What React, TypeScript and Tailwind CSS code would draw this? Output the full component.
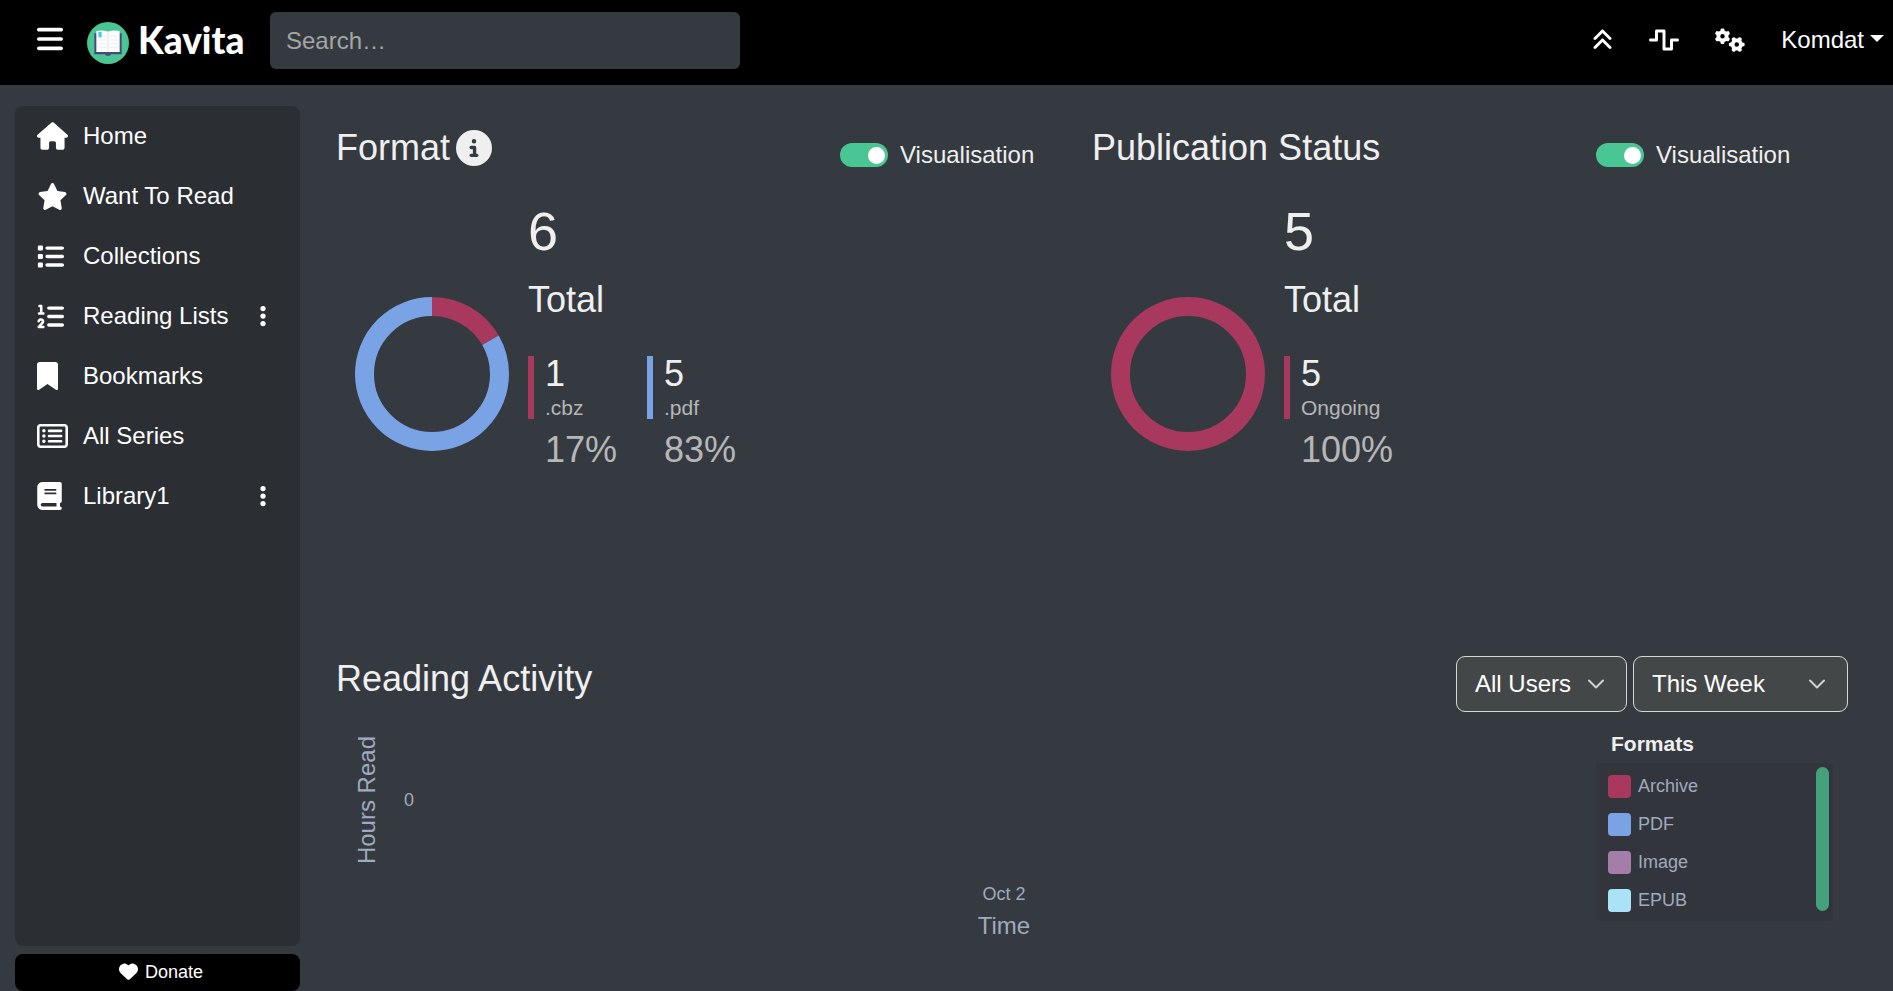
import type { ReactNode } from "react";
import {
  FaAnglesUp,
  FaBars,
  FaBook,
  FaBookmark,
  FaCircleInfo,
  FaEllipsisVertical,
  FaGears,
  FaHeart,
  FaHouse,
  FaList,
  FaListOl,
  FaRegRectangleList,
  FaStar,
  FaWaveSquare,
} from "react-icons/fa6";

type NavItem = { label: string; icon: ReactNode; menu?: boolean };

const navItems: NavItem[] = [
  { label: "Home", icon: <FaHouse className="h-[28px] w-[31px]" /> },
  { label: "Want To Read", icon: <FaStar className="h-[27px] w-[31px]" /> },
  { label: "Collections", icon: <FaList className="h-[27px] w-[27px]" /> },
  { label: "Reading Lists", icon: <FaListOl className="h-[27px] w-[27px]" />, menu: true },
  { label: "Bookmarks", icon: <FaBookmark className="h-[28px] w-[21px]" /> },
  { label: "All Series", icon: <FaRegRectangleList className="h-[28px] w-[31px]" /> },
  { label: "Library1", icon: <FaBook className="h-[28px] w-[25px]" />, menu: true },
];

type Slice = { name: string; value: number; color: string };

const formatSlices: Slice[] = [
  { name: ".cbz", value: 1, color: "#a8385d" },
  { name: ".pdf", value: 5, color: "#7aa3e5" },
];
const statusSlices: Slice[] = [{ name: "Ongoing", value: 5, color: "#a8385d" }];

const readingFormats = [
  { name: "Archive", color: "#a8385d" },
  { name: "PDF", color: "#7aa3e5" },
  { name: "Image", color: "#a27ea8" },
  { name: "EPUB", color: "#aae3f5" },
];

function Logo() {
  return (
    <svg viewBox="0 0 126 126" className="size-[42px]" aria-hidden="true">
      <circle cx="63" cy="63" r="63" fill="#4ac694" />
      <path d="M22 34h82v63H72c-1 6-17 6-18 0H22z" fill="#454a78" />
      <path d="M28 27q18-4 33 1l2 3 2-3q15-5 33-1v63H28z" fill="#fdfdfe" />
      <path d="M63 31v58" stroke="#dfe3ea" strokeWidth="3" />
      <path
        d="M46 42h12M34 54h24M34 65h24M34 76h24M69 42h24M69 54h24M69 65h24M69 76h24"
        stroke="#eceef2"
        strokeWidth="3"
      />
      <path d="M34 30h10v16h-10z" fill="#4fc6f5" />
    </svg>
  );
}

function Header() {
  return (
    <header className="flex h-[85px] shrink-0 items-center bg-black pr-[9px] pl-[37px] text-white">
      <button type="button" aria-label="Toggle side menu" className="mb-2">
        <FaBars className="h-[30px] w-[26px]" />
      </button>
      <a href="#" className="ml-6 flex w-[158px] items-center gap-[9px]">
        <Logo />
        <span className="pb-[6px] font-[Lato,sans-serif] text-[37px] leading-9 font-black">
          Kavita
        </span>
      </a>
      <input
        type="search"
        aria-label="Search"
        placeholder="Search…"
        className="mb-1 ml-[25px] h-[57px] w-[470px] rounded-md bg-[#343a40] px-4 text-2xl text-white placeholder:text-[#a5a5a5]"
      />
      <nav className="mb-[5px] ml-auto flex items-center">
        <button type="button" aria-label="Scroll to top">
          <FaAnglesUp className="h-6 w-[21px]" />
        </button>
        <a href="#" aria-label="Activity" className="ml-9">
          <FaWaveSquare className="h-6 w-[30px]" />
        </a>
        <a href="#" aria-label="Server settings" className="ml-9">
          <FaGears className="h-6 w-[30px]" />
        </a>
        <button type="button" className="ml-9 flex items-center gap-[6px] text-2xl">
          Komdat
          <svg viewBox="0 0 14 7" className="mb-1 h-[7px] w-[14px]" aria-hidden="true">
            <path d="M0 0h14L7 7z" fill="currentColor" />
          </svg>
        </button>
      </nav>
    </header>
  );
}

function Sidebar() {
  return (
    <aside className="flex w-[285px] shrink-0 flex-col gap-2 text-white">
      <nav className="flex-1 rounded-lg bg-[#2b2e32]">
        <ul>
          {navItems.map((item) => (
            <li key={item.label} className="flex h-[60px] items-center pr-[34px] pl-[22px]">
              <a href="#" className="flex flex-1 items-center text-2xl">
                <span className="w-[46px]">{item.icon}</span>
                {item.label}
              </a>
              {item.menu && (
                <button type="button" aria-label={`${item.label} actions`}>
                  <FaEllipsisVertical className="h-6 w-[6px]" />
                </button>
              )}
            </li>
          ))}
        </ul>
      </nav>
      <a
        href="#"
        className="flex h-[37px] items-center justify-center gap-[7px] rounded-lg bg-black pb-[2px] pl-[7px] text-lg"
      >
        <FaHeart className="size-[19px]" />
        Donate
      </a>
    </aside>
  );
}

function Donut({ slices }: { slices: Slice[] }) {
  const total = slices.reduce((sum, s) => sum + s.value, 0);
  let start = 0;
  return (
    <svg viewBox="0 0 154 154" className="mt-[98px] size-[154px]" aria-hidden="true">
      <g fill="none" strokeWidth="19" transform="rotate(-90 77 77)">
        {slices.map((s) => {
          const share = (s.value / total) * 100;
          const offset = -start;
          start += share;
          return (
            <circle
              key={s.name}
              cx="77"
              cy="77"
              r="67.5"
              pathLength={100}
              stroke={s.color}
              strokeDasharray={`${share} ${100 - share}`}
              strokeDashoffset={offset}
            />
          );
        })}
      </g>
    </svg>
  );
}

function PieSection({
  id,
  title,
  info,
  slices,
}: {
  id: string;
  title: string;
  info?: boolean;
  slices: Slice[];
}) {
  const total = slices.reduce((sum, s) => sum + s.value, 0);
  return (
    <section>
      <div className="grid grid-cols-3 items-start">
        <h2 className="col-span-2 flex items-center gap-[6px] text-[36px] leading-[43px]">
          {title}
          {info && <FaCircleInfo className="size-9" />}
        </h2>
        <div className="mt-[11px] flex items-center gap-3">
          <input
            id={id}
            type="checkbox"
            role="switch"
            defaultChecked
            className="flex h-6 w-12 shrink-0 appearance-none items-center rounded-full bg-gray-500 px-[3px] before:size-[17px] before:rounded-full before:bg-white before:content-[''] checked:justify-end checked:bg-[#4ac694]"
          />
          <label htmlFor={id} className="text-2xl leading-9">
            Visualisation
          </label>
        </div>
      </div>
      <div className="mt-[26px] flex gap-[19px] pl-[19px]">
        <Donut slices={slices} />
        <div>
          <p className="text-[54px] leading-[65px]">{total}</p>
          <p className="mt-[14px] text-[36px] leading-[43px]">Total</p>
          <ul className="mt-[35px] flex">
            {slices.map((s) => (
              <li key={s.name} className="min-w-[119px]">
                <div className="border-l-[6px] pl-[11px]" style={{ borderColor: s.color }}>
                  <p className="text-[36px] leading-9">{s.value}</p>
                  <p className="pt-1 text-[21px] leading-[23px] text-[#b5b6b7]">{s.name}</p>
                </div>
                <p className="mt-[9px] pl-[17px] text-[36px] leading-[43px] text-[#b5b6b7]">
                  {Math.round((s.value / total) * 100)}%
                </p>
              </li>
            ))}
          </ul>
        </div>
      </div>
    </section>
  );
}

function FilterSelect({
  label,
  options,
  width,
}: {
  label: string;
  options: string[];
  width: string;
}) {
  return (
    <div className={`relative ${width}`}>
      <select
        aria-label={label}
        className="h-14 w-full appearance-none rounded-[9px] border border-[#d5d6d7] bg-[#444748] pr-12 pl-[18px] text-2xl text-white"
      >
        {options.map((o) => (
          <option key={o}>{o}</option>
        ))}
      </select>
      <svg
        viewBox="0 0 16 16"
        className="pointer-events-none absolute top-5 right-[23px] size-4"
        fill="none"
        stroke="#d0d1d2"
        strokeWidth="2"
        strokeLinecap="round"
        strokeLinejoin="round"
        aria-hidden="true"
      >
        <path d="m1 4.5 7 7 7-7" />
      </svg>
    </div>
  );
}

function ReadingActivity() {
  return (
    <section>
      <div className="flex items-start gap-[6px]">
        <h2 className="flex-1 pt-px text-[36px] leading-[43px]">Reading Activity</h2>
        <FilterSelect label="User" options={["All Users", "Komdat"]} width="w-[171px]" />
        <FilterSelect label="Period" options={["This Week", "Last 30 Days"]} width="w-[215px]" />
      </div>
      <div className="flex">
        <div className="mt-1 flex-1 text-[#a0aabe]">
          <div className="flex h-[168px] items-center gap-[23px] pl-[17px]">
            <span className="rotate-180 text-2xl leading-7 [writing-mode:vertical-rl]">
              Hours Read
            </span>
            <span className="text-lg leading-5">0</span>
          </div>
          <div className="pl-[76px] text-center">
            <p className="text-lg leading-5">Oct 2</p>
            <p className="mt-1 text-2xl leading-9">Time</p>
          </div>
        </div>
        <div className="mr-[15px] w-[237px] pt-4">
          <h3 className="mb-[3px] pl-[15px] text-[21px] leading-8 font-bold">Formats</h3>
          <div className="flex justify-between rounded-[4px] bg-[#32363c] py-1 pr-1 pl-3">
            <ul className="flex flex-col gap-[15px] pt-2 pb-[5px]">
              {readingFormats.map((f) => (
                <li key={f.name} className="flex items-center gap-[7px] text-lg leading-[23px]">
                  <span className="size-[23px] rounded-[4px]" style={{ backgroundColor: f.color }} />
                  <span className="text-[#a0aabe]">{f.name}</span>
                </li>
              ))}
            </ul>
            <div className="mb-[6px] w-[13px] rounded-full bg-[#43a17c]" />
          </div>
        </div>
      </div>
    </section>
  );
}

export default function App() {
  return (
    <div className="flex min-h-screen flex-col bg-[#353a41] font-['Liberation_Sans',Arial,sans-serif] text-[#efefef]">
      <Header />
      <div className="flex flex-1 gap-9 pt-[21px] pr-[45px] pl-[15px]">
        <Sidebar />
        <main className="flex-1 pt-5">
          <div className="mb-[185px] grid grid-cols-2">
            <PieSection id="format-visualisation" title="Format" info slices={formatSlices} />
            <PieSection
              id="status-visualisation"
              title="Publication Status"
              slices={statusSlices}
            />
          </div>
          <ReadingActivity />
        </main>
      </div>
    </div>
  );
}
